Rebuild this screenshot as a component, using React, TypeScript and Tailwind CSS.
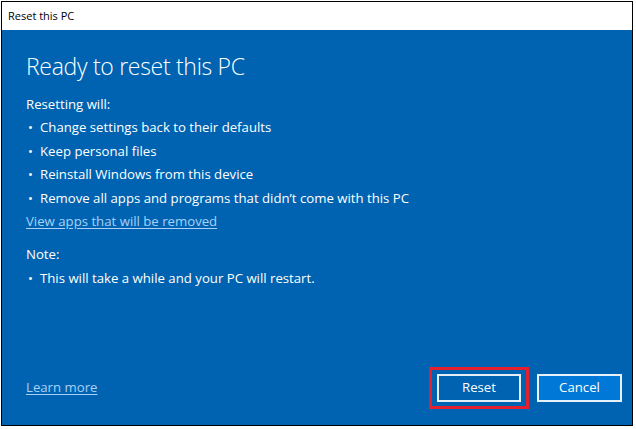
import React from 'react'

const bullets = [
  'Change settings back to their defaults',
  'Keep personal files',
  'Reinstall Windows from this device',
  'Remove all apps and programs that didn’t come with this PC',
]

const font = { fontFamily: '"Open Sans", "Noto Sans", sans-serif' }

function Bullet({ children }: { children: React.ReactNode }) {
  return (
    <div className="flex items-center h-[23.4px]">
      <span className="w-[14px] pl-[2px] text-[13px]">•</span>
      <span>{children}</span>
    </div>
  )
}

export default function App() {
  return (
    <div className="w-[636px] h-[429px] bg-white pt-[1px] pl-[1px]" style={font}>
      <div className="w-[632px] h-[425px] border border-black flex flex-col">
        {/* title bar */}
        <div className="h-[28px] bg-white flex items-center pl-[6px] text-[11px] text-black">
          Reset this PC
        </div>

        <div className="flex-1 bg-[#0063b1] text-white flex flex-col px-[24px]">
          <h1 className="text-[23px] font-light mt-[19px] leading-[34px] tracking-[-0.3px]">
            Ready to reset this PC
          </h1>

          <div className="text-[13.2px] mt-[10px] leading-[23.4px]">
            <div>Resetting will:</div>
            {bullets.map((b) => (
              <Bullet key={b}>{b}</Bullet>
            ))}
            <a className="block underline text-[#a7d1f7] underline-offset-2 w-fit">
              View apps that will be removed
            </a>

            <div className="mt-[10px]">Note:</div>
            <Bullet>This will take a while and your PC will restart.</Bullet>
          </div>

          <div className="mt-auto mb-[16px] flex items-center justify-between mr-[-14px]">
            <a className="underline text-[#a7d1f7] text-[13.2px] underline-offset-2">Learn more</a>
            <div className="flex items-center gap-[8px]">
              <div className="border-[3px] border-[#e5202e] px-[5px] py-[4px]">
                <button className="w-[84px] h-[28px] border-2 border-white/90 bg-[#0063b1] text-[13.2px] text-white">
                  Reset
                </button>
              </div>
              <button className="w-[85px] h-[28px] border-2 border-white/90 bg-[#0078d7] text-[13.2px] text-white">
                Cancel
              </button>
            </div>
          </div>
        </div>
      </div>
    </div>
  )
}
